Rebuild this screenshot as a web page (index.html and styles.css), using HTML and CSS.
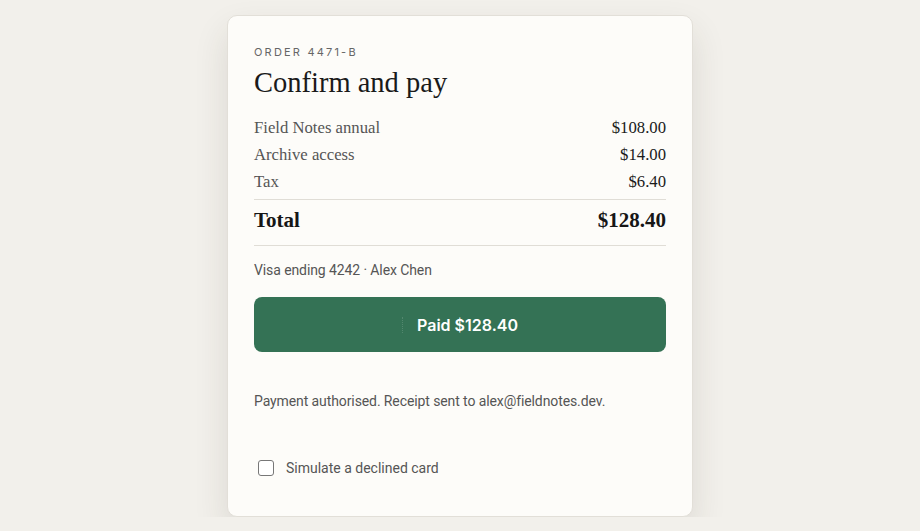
FILE: index.html
```html
<!DOCTYPE html>
<html lang="en">
<head>
  <meta charset="UTF-8">
  <meta name="viewport" content="width=device-width, initial-scale=1.0">
  <title>Confirm and pay</title>
  <link rel="stylesheet" href="styles.css">
</head>
<body>
  <div class="checkout-card">
    <div class="order-id">Order 4471-B</div>
    <h1 class="title">Confirm and pay</h1>

    <div class="line-items">
      <div class="line-item">
        <span class="item-name">Field Notes annual</span>
        <span class="item-price">$108.00</span>
      </div>
      <div class="line-item">
        <span class="item-name">Archive access</span>
        <span class="item-price">$14.00</span>
      </div>
      <div class="line-item">
        <span class="item-name">Tax</span>
        <span class="item-price">$6.40</span>
      </div>
    </div>

    <div class="total-row">
      <span>Total</span>
      <span>$128.40</span>
    </div>

    <p class="card-info">Visa ending 4242 · Alex Chen</p>

    <button class="pay-btn" type="button">
      <span class="spinner"></span>
      <span>Paid $128.40</span>
    </button>

    <p class="status-msg">Payment authorised. Receipt sent to alex@fieldnotes.dev.</p>

    <label class="simulate">
      <input type="checkbox" class="simulate-box">
      <span>Simulate a declined card</span>
    </label>
  </div>
</body>
</html>
```

FILE: styles.css
```css
body {
  margin: 0;
  background: #f2f0eb;
  font-family: Roboto, "Noto Sans", sans-serif;
  color: #222;
}
.checkout-card {
  width: 412px;
  margin: 15px auto 0;
  padding: 28px 26px 40px;
  background: #fdfcf9;
  border: 1px solid #e2dfd8;
  border-radius: 10px;
  box-shadow: 0 16px 34px rgba(60, 50, 30, 0.12);
}
.order-id {
  font-family: Inter, "Noto Sans", sans-serif;
  font-size: 11px;
  letter-spacing: 2.2px;
  text-transform: uppercase;
  color: #666;
  line-height: 16px;
}
.title {
  margin: 6px 0 14px;
  font-family: "Liberation Serif", Georgia, serif;
  font-weight: normal;
  font-size: 28.5px;
  line-height: 34px;
  color: #1a1a1a;
}
.line-items {
  padding-bottom: 4px;
  border-bottom: 1px solid #e0ddd6;
}
.line-item {
  display: flex;
  justify-content: space-between;
  font-family: "Liberation Serif", Georgia, serif;
  font-size: 16.7px;
  line-height: 27px;
}
.item-name {
  color: #555;
}
.item-price {
  color: #1a1a1a;
}
.total-row {
  display: flex;
  justify-content: space-between;
  padding: 6px 0 10px;
  border-bottom: 1px solid #e0ddd6;
  font-family: "Liberation Serif", Georgia, serif;
  font-weight: bold;
  font-size: 21px;
  line-height: 29px;
  color: #161616;
}
.card-info {
  margin: 15px 0 18px;
  font-size: 14px;
  line-height: 18px;
  letter-spacing: -0.1px;
  color: #555;
}
.pay-btn {
  display: flex;
  align-items: center;
  justify-content: center;
  gap: 14px;
  width: 100%;
  height: 55px;
  border: none;
  border-radius: 8px;
  background: #347255;
  color: #fff;
  font-family: Inter, "Noto Sans", sans-serif;
  font-size: 16px;
  font-weight: 600;
  cursor: pointer;
}
.spinner {
  width: 0;
  height: 16px;
  border-left: 1px dotted rgba(255, 255, 255, 0.15);
}
.status-msg {
  margin: 40px 0 0;
  font-size: 14px;
  line-height: 18px;
  letter-spacing: -0.1px;
  color: #555;
}
.simulate {
  display: flex;
  align-items: center;
  gap: 12px;
  margin-top: 50px;
  padding-left: 4px;
  font-size: 14px;
  color: #555;
  cursor: pointer;
}
.simulate-box {
  appearance: none;
  width: 16px;
  height: 16px;
  margin: 0;
  border: 1.5px solid #777;
  border-radius: 3px;
  background: #fff;
}
```
